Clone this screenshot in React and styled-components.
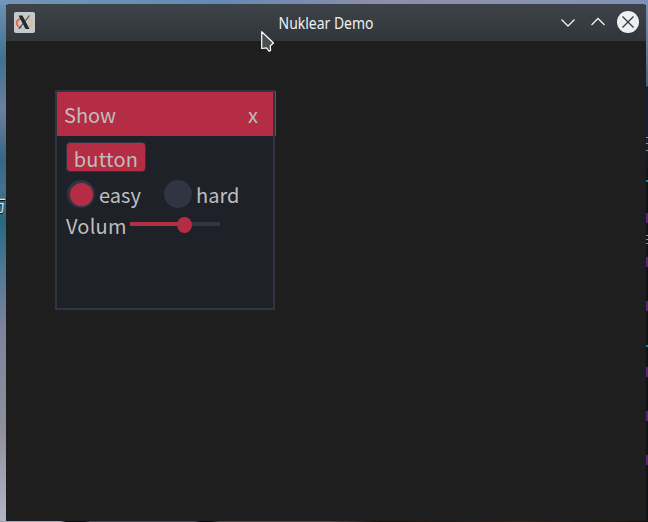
import React from "react";
import styled, { createGlobalStyle } from "styled-components";

const GlobalStyle = createGlobalStyle`
  * { box-sizing: border-box; }
  body { margin: 0; overflow: hidden; }
`;

const Desktop = styled.div`
  position: relative;
  width: 648px;
  height: 522px;
  padding: 4px 2px 1px 6px;
  overflow: hidden;
  background:
    linear-gradient(90deg, #7295b8, #6689b4 35%, #8f8fa9 60%, #8793b2 85%, #7f91b5) 0 0 / 100% 5px no-repeat,
    linear-gradient(90deg, #a3a5b0 0 60px, #0b0b10 66px 84px, #4a4a50 90px 195px, #08080c 200px 210px, #4b4644 220px 330px, #17120e 380px, #3a2210 520px, #17120e) 0 100% / 100% 1px no-repeat,
    linear-gradient(180deg, #7092b5, #3f7290 60px, #6d7f9f 110px, #356783 160px, #46708e 190px, #26697f 220px, #4e7894 270px, #7f839c 330px, #8e909b 430px, #b3b4c4) 0 0 / 6px 100% no-repeat,
    linear-gradient(180deg, #7f91b5, #66758f 50px, #4a5c6e 86px, #15202a 87px 150px, #111417 180px) 100% 0 / 2px 100% no-repeat,
    #111417;
`;

const Window = styled.main`
  display: flex;
  flex-direction: column;
  height: 517px;
  overflow: hidden;
  border-radius: 4px 4px 0 0;
  background: #1e1e1e;
`;

const TitleBar = styled.header`
  display: grid;
  grid-template-columns: 100px 1fr 100px;
  align-items: center;
  flex: none;
  height: 37px;
  background: linear-gradient(#3e4349, #30363a);
`;

const AppIcon = styled.svg`
  width: 21px;
  height: 21px;
  margin-left: 8px;
`;

const Title = styled.h1`
  margin: 0;
  text-align: center;
  font: 400 15.5px/24px "Noto Sans", sans-serif;
  color: #eff0f1;
  white-space: nowrap;
  transform: scaleX(0.9);
`;

const Controls = styled.div`
  display: flex;
  justify-content: flex-end;
  gap: 8px;
  padding-right: 7px;
`;

const ControlButton = styled.button`
  display: block;
  width: 22px;
  height: 22px;
  margin-top: -2px;
  padding: 0;
  border: 0;
  border-radius: 50%;
  background: ${(p) => (p.$filled ? "#eff0f1" : "transparent")};
  color: ${(p) => (p.$filled ? "#343a3e" : "#eff0f1")};
  svg { display: block; }
`;

const Canvas = styled.section`
  flex: 1;
  padding: 49px 0 0 49px;
`;

const Panel = styled.div`
  width: 220px;
  height: 220px;
  border: 2px solid #313441;
  background: #1e2128;
  font: 400 20px/30px "Noto Sans CJK SC", sans-serif;
  color: #bebebe;
`;

const PanelHeader = styled.div`
  position: relative;
  display: flex;
  justify-content: space-between;
  height: 44px;
  padding: 8px 15px 0 7px;
  background: #b52d44;
  &::after {
    content: "";
    position: absolute;
    top: -1px;
    right: -3px;
    width: 1px;
    height: 45px;
    background: #b52d44;
  }
`;

const PanelBody = styled.div`
  display: flex;
  flex-direction: column;
  padding: 6px 9px;
`;

const PanelButton = styled.button`
  width: 80px;
  height: 30px;
  padding: 2px 0 0;
  border: 1px solid #313441;
  border-radius: 4px;
  background: #b52d44;
  font: inherit;
  line-height: 28px;
  letter-spacing: 0.2px;
  color: inherit;
`;

const Options = styled.div`
  display: grid;
  grid-template-columns: 97px 1fr;
  height: 38px;
  padding: 8px 0 0 1px;
`;

const Option = styled.label`
  display: flex;
  gap: 4px;
  height: 30px;
`;

const Radio = styled.span`
  display: grid;
  place-items: center;
  flex: none;
  width: 28px;
  height: 28px;
  border-radius: 50%;
  background: #313441;
  &::before {
    content: "";
    width: 23px;
    height: 23px;
    border-radius: 50%;
    background: ${(p) => (p.$checked ? "#b52d44" : "transparent")};
  }
`;

const VolumeRow = styled.div`
  display: flex;
  height: 32px;
`;

const VolumeLabel = styled.span`
  width: 64px;
  padding-top: 1px;
  letter-spacing: 0.2px;
`;

const Track = styled.div`
  position: relative;
  width: 90px;
  height: 4px;
  margin-top: 12px;
  background: #313441;
`;

const Fill = styled.div`
  width: 54px;
  height: 4px;
  background: #b52d44;
`;

const Handle = styled.span`
  position: absolute;
  left: 47px;
  top: -5px;
  width: 15px;
  height: 16px;
  border-radius: 50%;
  background: #b52d44;
`;

const Cursor = styled.svg`
  position: absolute;
  left: 260px;
  top: 30px;
`;

const EdgeGlyph = styled.span`
  position: absolute;
  left: -10px;
  top: 194px;
  width: 16px;
  overflow: hidden;
  font: 400 16px/20px "Noto Sans CJK SC", sans-serif;
  color: #e0e4e6;
  text-shadow: 0 1px 1px #000;
`;

const EdgeMark = styled.span`
  position: absolute;
  right: 0;
  top: ${(p) => p.$top}px;
  width: 2px;
  height: ${(p) => p.$height}px;
  background: ${(p) => p.$color};
`;

const marks = [
  ...[213, 257, 301, 367, 411, 455].map((top) => ({ top, height: 10, color: "#54276a" })),
  ...[180, 345].map((top) => ({ top, height: 2, color: "#2b7d98" })),
  ...[137, 143, 150, 235, 239, 243].map((top) => ({ top, height: 1, color: "#929292" })),
];

export default function App() {
  return (
    <Desktop>
      <GlobalStyle />
      <EdgeGlyph>万</EdgeGlyph>
      {marks.map((m) => (
        <EdgeMark key={m.top} $top={m.top} $height={m.height} $color={m.color} />
      ))}
      <Window>
        <TitleBar>
          <AppIcon viewBox="0 0 21 21" fill="none">
            <rect width="21" height="21" rx="2" fill="#c4c9cc" />
            <path d="M8 6.5C4.5 7 2.5 9 2.8 11.5S5 15.3 8 15.5" stroke="#e9653b" strokeWidth="1.8" />
            <path d="M13.5 6.5c3 .6 4.8 2.5 4.5 4.8s-2.4 4-6 4.4" stroke="#e6b577" strokeWidth="1.4" />
            <path d="M4.500 3.500h4l7 13.500h-4z" fill="#25292b" />
            <path d="M15.500 3.500 10.800 9.500M9 11.500 4.800 17" stroke="#3b4144" strokeWidth="1.1" />
          </AppIcon>
          <Title>Nuklear Demo</Title>
          <Controls>
            <ControlButton aria-label="Minimize">
              <svg width="22" height="22" fill="none" stroke="currentColor" strokeWidth="1.3">
                <path d="m4.5 8.500 6.500 6.500L17.5 8.500" />
              </svg>
            </ControlButton>
            <ControlButton aria-label="Maximize">
              <svg width="22" height="22" fill="none" stroke="currentColor" strokeWidth="1.3">
                <path d="M4.5 14 11 7.5l6.5 6.5" />
              </svg>
            </ControlButton>
            <ControlButton $filled aria-label="Close">
              <svg width="22" height="22" fill="none" stroke="currentColor" strokeWidth="1.3">
                <path d="m5.5 5.500 11 11m0-11-11 11" />
              </svg>
            </ControlButton>
          </Controls>
        </TitleBar>
        <Canvas>
          <Panel>
            <PanelHeader>
              <span>Show</span>
              <span>x</span>
            </PanelHeader>
            <PanelBody>
              <PanelButton>button</PanelButton>
              <Options>
                <Option><Radio $checked />easy</Option>
                <Option><Radio />hard</Option>
              </Options>
              <VolumeRow>
                <VolumeLabel>Volum</VolumeLabel>
                <Track>
                  <Fill />
                  <Handle />
                </Track>
              </VolumeRow>
            </PanelBody>
          </Panel>
        </Canvas>
      </Window>
      <Cursor width="16" height="24" viewBox="0 0 16 24">
        <path d="M1.7 1.7v16.8l4.8-.7 2.7 3.5 1.4-.8-.3-4.8 3.2-2.7z" fill="#4b4d4f" stroke="#fff" strokeWidth="1.2" strokeLinejoin="round" />
      </Cursor>
    </Desktop>
  );
}
